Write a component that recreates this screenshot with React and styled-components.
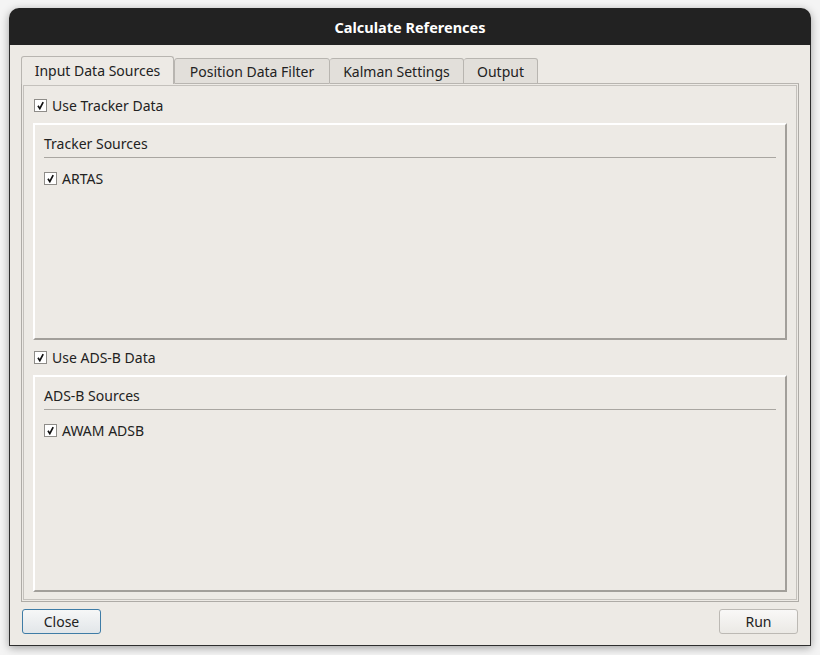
import styled, { createGlobalStyle } from "styled-components";

const GlobalStyle = createGlobalStyle`
  html, body {
    margin: 0;
    padding: 0;
    background: #f4f4f4;
  }
  body {
    font-family: "Noto Sans", "DejaVu Sans", sans-serif;
    font-size: 14px;
    color: #2a2a2a;
  }
`;

const tabs = [
  { label: "Input Data Sources", width: 153 },
  { label: "Position Data Filter", width: 156 },
  { label: "Kalman Settings", width: 134 },
  { label: "Output", width: 74 },
];

const sections = [
  { toggle: "Use Tracker Data", title: "Tracker Sources", items: ["ARTAS"] },
  { toggle: "Use ADS-B Data", title: "ADS-B Sources", items: ["AWAM ADSB"] },
];

const Check = ({ label, inset }) => (
  <CheckRow $inset={inset}>
    <Box>
      <svg width="9" height="9" viewBox="0 0 9 9">
        <path d="M2 4.8 L3.8 7.6 L7.2 1.2" fill="none" stroke="#111" strokeWidth="1.7" />
      </svg>
    </Box>
    <span>{label}</span>
  </CheckRow>
);

const App = () => {
  return (
    <Page>
      <GlobalStyle />
      <Window>
        <TitleBar>Calculate References</TitleBar>
        <Body>
          <TabBar>
            {tabs.map((t, i) => (
              <Tab key={t.label} $active={i === 0} $width={t.width}>
                {t.label}
              </Tab>
            ))}
            <TabFill />
          </TabBar>
          <Pane>
            {sections.map((s) => (
              <Section key={s.title}>
                <Check label={s.toggle} inset />
                <GroupBox>
                  <GroupTitle>{s.title}</GroupTitle>
                  <Separator />
                  {s.items.map((it) => (
                    <ItemRow key={it}>
                      <Check label={it} />
                    </ItemRow>
                  ))}
                </GroupBox>
              </Section>
            ))}
          </Pane>
          <Footer>
            <Button $primary>Close</Button>
            <Button>Run</Button>
          </Footer>
        </Body>
      </Window>
    </Page>
  );
};

export default App;

const Page = styled.div`
  width: 820px;
  height: 655px;
  padding: 8px 0 0 9px;
  box-sizing: border-box;
`;

const Window = styled.div`
  width: 802px;
  height: 638px;
  display: flex;
  flex-direction: column;
  border-radius: 10px 10px 0 0;
  background: #edeae5;
  box-shadow: 0 2px 9px rgba(0, 0, 0, 0.35);
  overflow: hidden;
`;

const TitleBar = styled.div`
  height: 37px;
  flex: none;
  background: #222222;
  color: #ffffff;
  font-weight: 700;
  font-size: 14.5px;
  display: flex;
  align-items: center;
  justify-content: center;
`;

const Body = styled.div`
  flex: 1;
  display: flex;
  flex-direction: column;
  padding: 11px;
  border: 1px solid #2e2e2e;
  border-top: none;
  min-height: 0;
`;

const TabBar = styled.div`
  display: flex;
  align-items: flex-end;
  height: 28px;
  flex: none;
`;

const Tab = styled.div`
  width: ${(p) => p.$width}px;
  height: ${(p) => (p.$active ? "28px" : "26px")};
  box-sizing: border-box;
  display: flex;
  align-items: center;
  justify-content: center;
  background: ${(p) => (p.$active ? "#edeae5" : "#e2dfda")};
  border: 1px solid #b8b5b0;
  border-bottom: ${(p) => (p.$active ? "none" : "1px solid #b8b5b0")};
  border-left: ${(p) => (p.$active ? "1px solid #b8b5b0" : "none")};
  border-radius: 3px 3px 0 0;
  color: #222;
  white-space: nowrap;
  &:nth-child(2) {
    border-left: 1px solid #b8b5b0;
  }
`;

const TabFill = styled.div`
  flex: 1;
  height: 1px;
  background: #b8b5b0;
`;

const Pane = styled.div`
  flex: 1;
  display: flex;
  flex-direction: column;
  gap: 7px;
  padding: 11px 11px 9px 11px;
  border: 1px solid #aeaba6;
  border-top: none;
  box-shadow: inset 0 0 0 1px #edeae5, inset 0 0 0 2px #c4c1bc;
`;

const Section = styled.div`
  flex: 1;
  display: flex;
  flex-direction: column;
  gap: 8px;
`;

const CheckRow = styled.div`
  display: flex;
  align-items: center;
  gap: 5px;
  height: 20px;
  padding-left: ${(p) => (p.$inset ? "1px" : "0")};
  color: #222;
`;

const Box = styled.span`
  width: 13px;
  height: 13px;
  box-sizing: border-box;
  border: 1px solid #8e8c88;
  background: #ffffff;
  display: flex;
  align-items: center;
  justify-content: center;
`;

const GroupBox = styled.div`
  flex: 1;
  display: flex;
  flex-direction: column;
  padding: 9px 9px 0 9px;
  border: 2px solid;
  border-color: #ffffff #a29f9a #a29f9a #ffffff;
`;

const GroupTitle = styled.div`
  height: 18px;
  display: flex;
  align-items: center;
  color: #222;
`;

const Separator = styled.div`
  height: 1px;
  background: #a9a6a1;
  margin-top: 5px;
`;

const ItemRow = styled.div`
  margin-top: 10px;
`;

const Footer = styled.div`
  display: flex;
  justify-content: space-between;
  margin-top: 7px;
  padding: 0 1px;
`;

const Button = styled.button`
  width: 79px;
  height: 25px;
  font-family: inherit;
  font-size: 14px;
  color: #222;
  border-radius: 3px;
  border: 1px solid ${(p) => (p.$primary ? "#3f7ca6" : "#bcb9b4")};
  background: ${(p) =>
    p.$primary
      ? "linear-gradient(#f6f7f7, #e2e6e9)"
      : "linear-gradient(#f9f8f7, #ebe9e5)"};
  padding: 0;
`;
